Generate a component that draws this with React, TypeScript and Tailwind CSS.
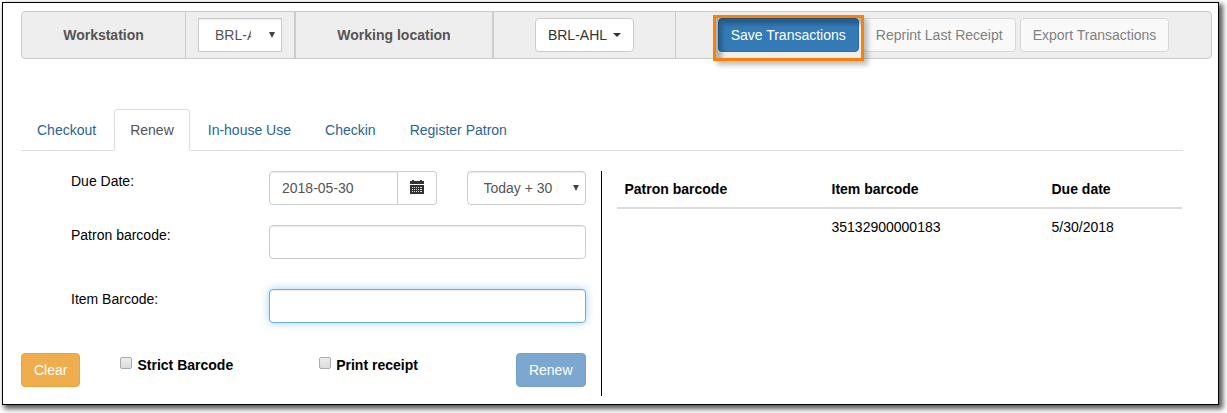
import { useState } from 'react';
import type { ReactNode } from 'react';

const tabs = ['Checkout', 'Renew', 'In-house Use', 'Checkin', 'Register Patron'];

const rows = [{ patron: '', item: '35132900000183', due: '5/30/2018' }];

const control =
  'h-[34px] border border-[#ccc] bg-white text-[#555] outline-none shadow-[inset_0_1px_1px_rgba(0,0,0,0.075)]';
const button = 'h-[34px] rounded border px-3 whitespace-nowrap';

function SelectArrow() {
  return (
    <svg className="pointer-events-none absolute top-[14px] right-[7px]" width="6" height="6" viewBox="0 0 6 6">
      <path d="M0 0h6L3 6z" fill="#444" />
    </svg>
  );
}

function CalendarIcon() {
  return (
    <svg width="14" height="14" viewBox="0 0 14 14" fill="#333" aria-hidden="true">
      <path d="M0 1h2V0h2v1h6V0h2v1h2v3H0z" />
      <path d="M0 5h14v9H0z" />
      <path
        d="M2 7h1v1H2zM4 7h1v1H4zM6 7h1v1H6zM8 7h1v1H8zM10 7h2v1h-2zM2 9h1v1H2zM4 9h1v1H4zM6 9h1v1H6zM8 9h1v1H8zM10 9h2v1h-2zM2 11h1v1H2zM4 11h1v1H4zM6 11h1v1H6zM8 11h1v1H8zM10 11h2v1h-2z"
        fill="#ddd"
      />
    </svg>
  );
}

function Checkbox({ id, children }: { id: string; children: ReactNode }) {
  return (
    <div className="flex gap-[5px] pt-[2px]">
      <input
        id={id}
        type="checkbox"
        className="mt-[2px] size-3 shrink-0 appearance-none rounded-[2px] border border-[#aaa] bg-linear-to-b from-[#eee] to-[#dcdcdc] checked:from-[#337ab7] checked:to-[#337ab7]"
      />
      <label htmlFor={id} className="font-bold whitespace-nowrap">
        {children}
      </label>
    </div>
  );
}

function Toolbar() {
  return (
    <div className="mr-[6px] flex h-12 items-stretch rounded border border-[#ccc] bg-[#eee]">
      <label
        htmlFor="workstation"
        className="flex w-[164px] shrink-0 items-center justify-center border-r border-[#ccc] font-bold text-[#555]"
      >
        Workstation
      </label>
      <div className="flex w-[110px] shrink-0 items-center justify-center border-r-2 border-[#ccc]">
        <div className="relative w-[84px]">
          <select id="workstation" className={`${control} w-full appearance-none pr-[30px] pl-4`}>
            <option>BRL-AHL</option>
          </select>
          <SelectArrow />
        </div>
      </div>
      <div className="flex w-[198px] shrink-0 items-center justify-center border-r-2 border-[#ccc] font-bold text-[#555]">
        Working location
      </div>
      <div className="flex w-[182px] shrink-0 items-center justify-center border-r border-[#ccc]">
        <button type="button" className={`${button} flex items-center gap-[6px] border-[#ccc] bg-white text-[#333]`}>
          BRL-AHL
          <svg width="8" height="4" viewBox="0 0 8 4">
            <path d="M0 0h8L4 4z" fill="#333" />
          </svg>
        </button>
      </div>
      <div className="flex flex-1 items-center justify-center gap-1">
        <div className="relative">
          <button type="button" className={`${button} border-[#2e6da4] bg-[#337ab7] text-white`}>
            Save Transactions
          </button>
          <div className="pointer-events-none absolute -top-[3px] -right-[5px] -bottom-[9px] -left-[5px] z-10 border-3 border-[#ff8000] shadow-[4px_4px_5px_rgba(0,0,0,0.25),inset_6px_6px_4px_rgba(0,0,0,0.25)]" />
        </div>
        <button type="button" disabled className={`${button} border-[#d8d8d8] bg-[#f9f9f9] text-[#818181]`}>
          Reprint Last Receipt
        </button>
        <button type="button" disabled className={`${button} border-[#d8d8d8] bg-[#f9f9f9] text-[#818181]`}>
          Export Transactions
        </button>
      </div>
    </div>
  );
}

function RenewForm() {
  const [date, setDate] = useState('2018-05-30');

  return (
    <form className="pr-4" onSubmit={(e) => e.preventDefault()}>
      <div className="mb-5 flex">
        <label htmlFor="due" className="w-[248px] shrink-0 pl-[50px]">
          Due Date:
        </label>
        <div className="flex min-w-0 flex-1 gap-[30px]">
          <div className="flex min-w-0 flex-1">
            <input
              id="due"
              value={date}
              onChange={(e) => setDate(e.target.value)}
              className={`${control} min-w-0 flex-1 rounded-l px-3`}
            />
            <button
              type="button"
              aria-label="Pick a date"
              className="flex w-[39px] items-center justify-center rounded-r border border-l-0 border-[#ccc] bg-white pb-[2px]"
            >
              <CalendarIcon />
            </button>
          </div>
          <div className="relative w-[119px] shrink-0">
            <select aria-label="Due date preset" className={`${control} w-full appearance-none rounded pr-5 pl-4`}>
              <option>Today + 30</option>
            </select>
            <SelectArrow />
          </div>
        </div>
      </div>
      <div className="mb-[30px] flex">
        <label htmlFor="patron" className="w-[248px] shrink-0 pl-[50px]">
          Patron barcode:
        </label>
        <input id="patron" className={`${control} min-w-0 flex-1 rounded px-3`} />
      </div>
      <div className="mb-[30px] flex">
        <label htmlFor="item" className="w-[248px] shrink-0 pl-[50px]">
          Item Barcode:
        </label>
        <input
          id="item"
          className="h-[34px] min-w-0 flex-1 rounded border border-[#66afe9] bg-white px-3 text-[#555] shadow-[inset_0_1px_1px_rgba(0,0,0,0.075),0_0_8px_rgba(102,175,233,0.6)] outline-none"
        />
      </div>
      <div className="flex items-start">
        <button type="button" className={`${button} mr-10 border-[#eea236] bg-[#f0ad4e] text-white`}>
          Clear
        </button>
        <div className="flex gap-[86px]">
          <Checkbox id="strict">Strict Barcode</Checkbox>
          <Checkbox id="print">Print receipt</Checkbox>
        </div>
        <button type="submit" disabled className={`${button} ml-auto border-[#76a0c5] bg-[#7ba7d0] text-white`}>
          Renew
        </button>
      </div>
    </form>
  );
}

export default function App() {
  const [active, setActive] = useState('Renew');

  return (
    <div className="bg-white pt-[2px] pr-2 pb-2 pl-[2px] font-['Liberation_Sans',Arial,sans-serif] text-sm leading-5 text-black">
      <main className="border border-black pt-2 pb-2 pl-[18px] shadow-[3px_3px_5px_1px_rgba(0,0,0,0.65)]">
        <Toolbar />

        <nav className="mt-[50px] mr-[35px] flex gap-[2px] border-b border-[#ddd]">
          {tabs.map((tab) => (
            <a
              key={tab}
              href="#"
              onClick={(e) => {
                e.preventDefault();
                setActive(tab);
              }}
              className={`-mb-px rounded-t border px-[15px] py-[10px] whitespace-nowrap ${
                tab === active
                  ? 'border-[#ddd] border-b-white bg-white text-[#555]'
                  : 'border-transparent text-[#2a6496]'
              }`}
            >
              {tab}
            </a>
          ))}
        </nav>

        <div className="mt-5 mr-9 grid grid-cols-2">
          <RenewForm />
          <div className="-ml-px min-h-[225px] border-l border-black pl-[15px]">
            <table className="w-full table-fixed text-left">
              <colgroup>
                <col className="w-[207px]" />
                <col className="w-[220px]" />
                <col />
              </colgroup>
              <thead>
                <tr className="border-b-2 border-[#ddd]">
                  <th className="p-2">Patron barcode</th>
                  <th className="p-2">Item barcode</th>
                  <th className="p-2">Due date</th>
                </tr>
              </thead>
              <tbody>
                {rows.map((row) => (
                  <tr key={row.item}>
                    <td className="p-2">{row.patron}</td>
                    <td className="p-2">{row.item}</td>
                    <td className="p-2">{row.due}</td>
                  </tr>
                ))}
              </tbody>
            </table>
          </div>
        </div>
      </main>
    </div>
  );
}
